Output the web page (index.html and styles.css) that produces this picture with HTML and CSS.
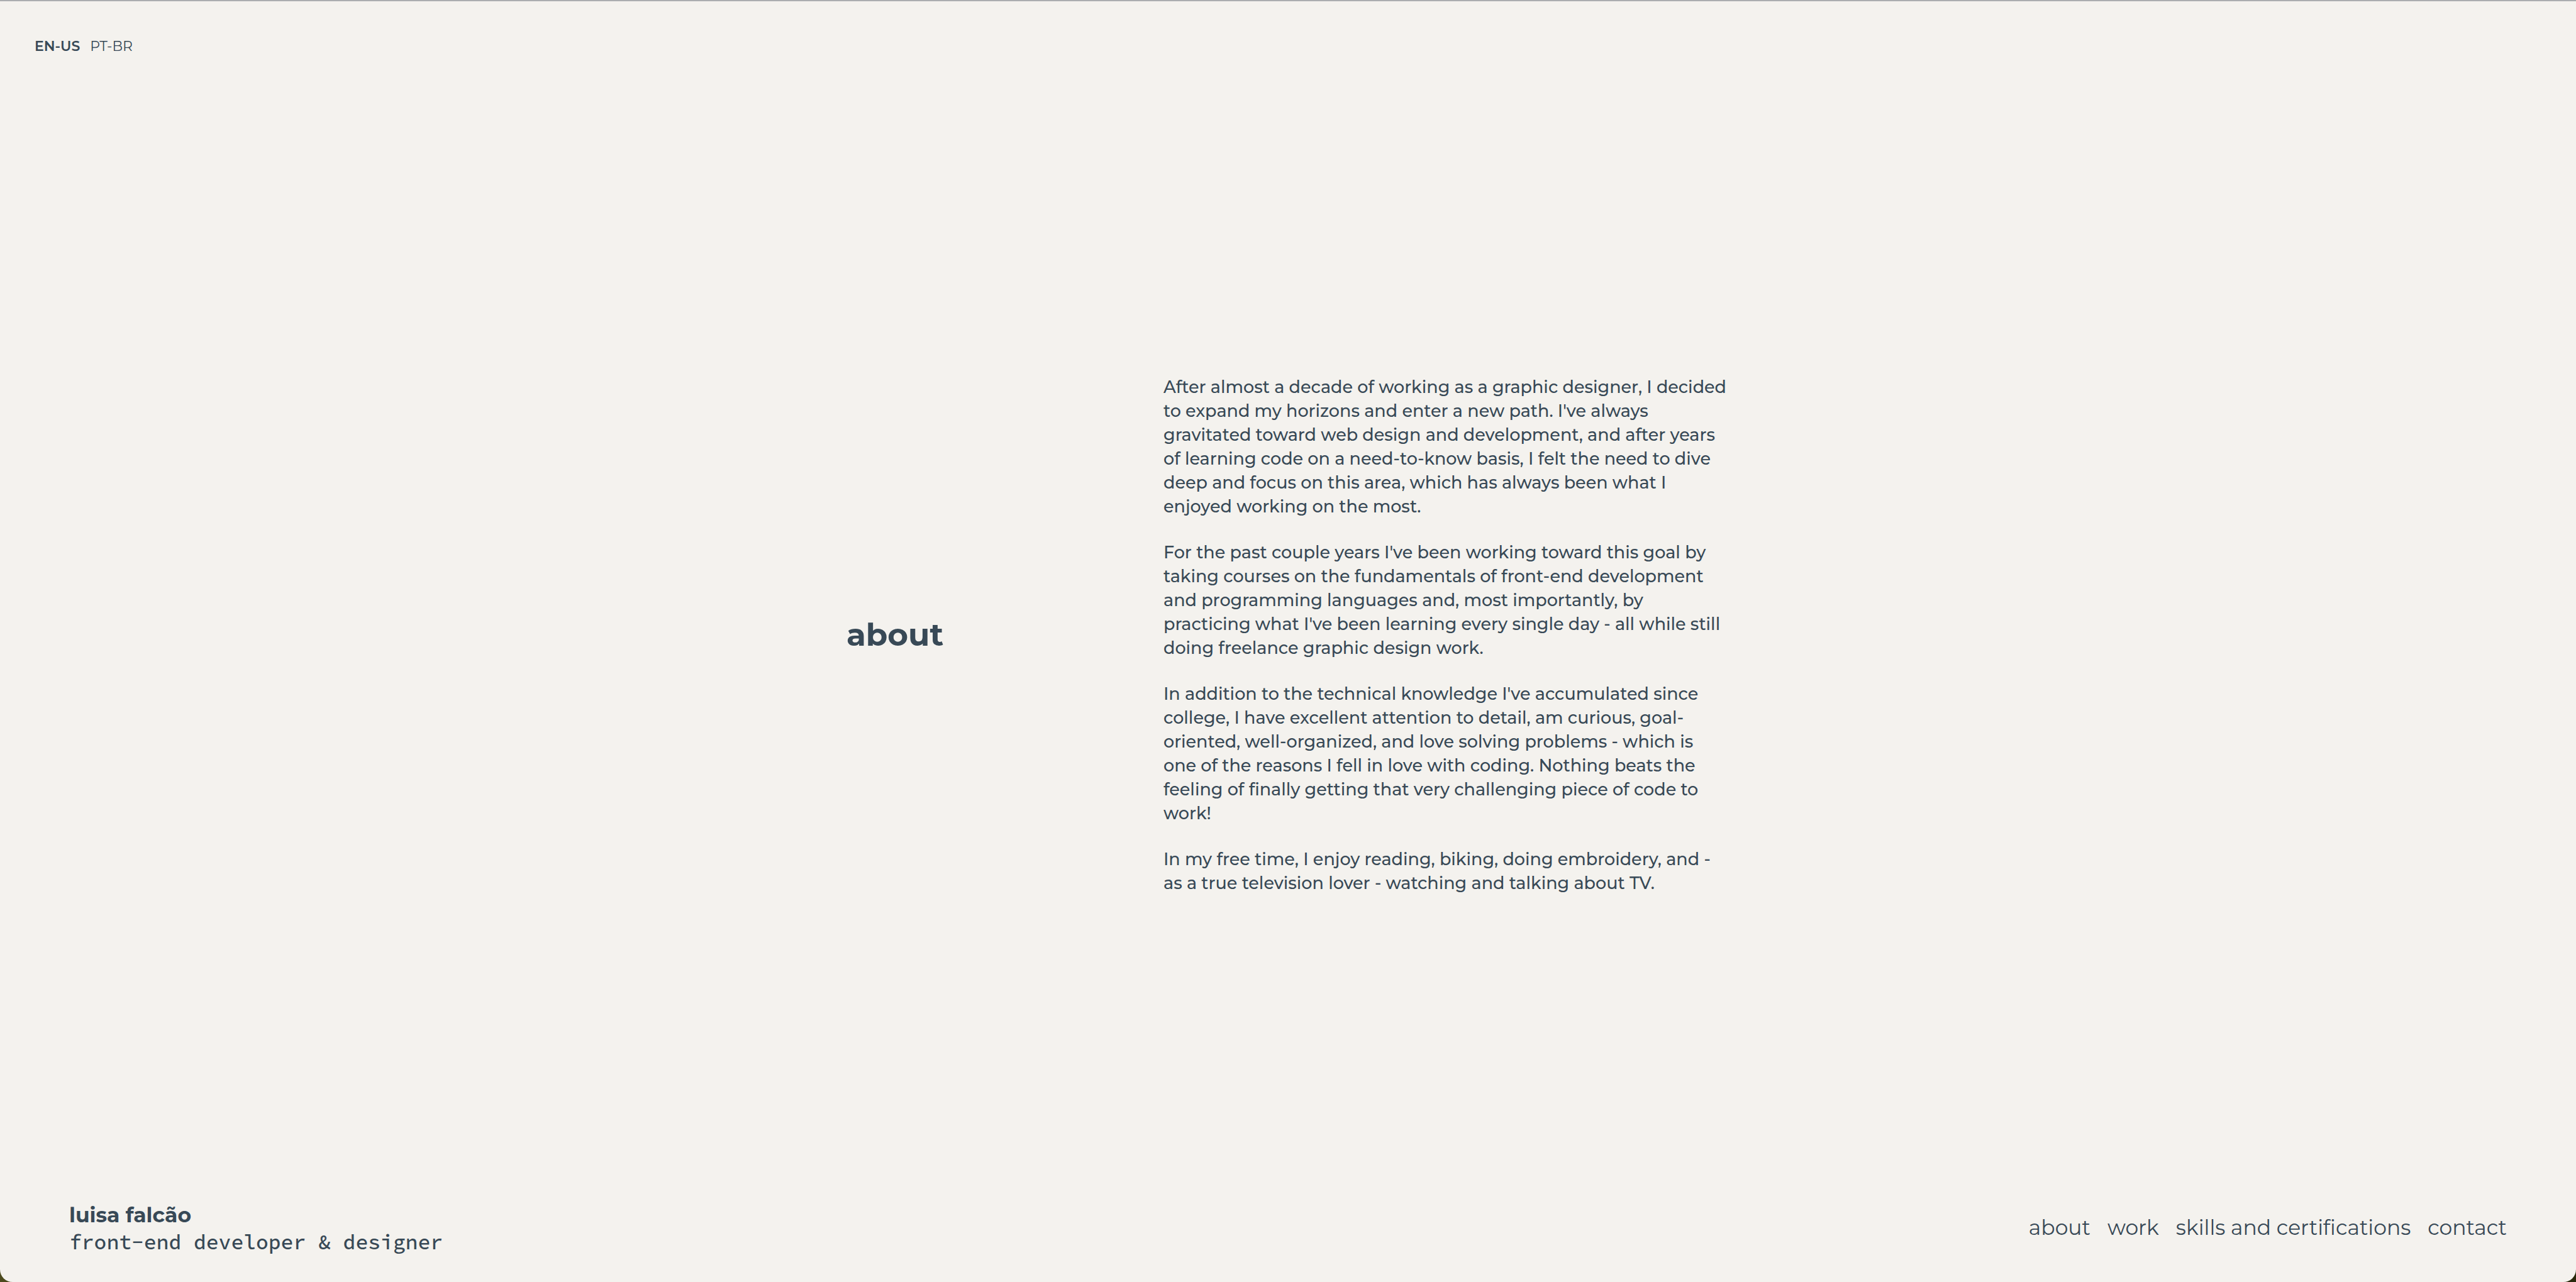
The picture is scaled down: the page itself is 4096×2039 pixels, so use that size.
FILE: index.html
```html
<!DOCTYPE html>
<html lang="en-US">
<head>
<meta charset="utf-8">
<meta name="viewport" content="width=device-width, initial-scale=1">
<title>luisa falcão</title>
<link rel="stylesheet" href="styles.css">
</head>
<body>
<div class="page">
  <header class="header">
    <nav class="languages" aria-label="Language">
      <a class="language language-active" href="#en">EN-US</a>
      <a class="language" href="#pt">PT-BR</a>
    </nav>
  </header>
  <main class="main">
    <section class="about" id="about">
      <h1 class="about-title">about</h1>
      <div class="about-text">
        <p>After almost a decade of working as a graphic designer, I decided<br>to expand my horizons and enter a new path. I've always<br>gravitated toward web design and development, and after years<br>of learning code on a need-to-know basis, I felt the need to dive<br>deep and focus on this area, which has always been what I<br>enjoyed working on the most.</p>
        <p>For the past couple years I've been working toward this goal by<br>taking courses on the fundamentals of front-end development<br>and programming languages and, most importantly, by<br>practicing what I've been learning every single day - all while still<br>doing freelance graphic design work.</p>
        <p>In addition to the technical knowledge I've accumulated since<br>college, I have excellent attention to detail, am curious, goal-<br>oriented, well-organized, and love solving problems - which is<br>one of the reasons I fell in love with coding. Nothing beats the<br>feeling of finally getting that very challenging piece of code to<br>work!</p>
        <p>In my free time, I enjoy reading, biking, doing embroidery, and -<br>as a true television lover - watching and talking about TV.</p>
      </div>
    </section>
  </main>
  <footer class="footer">
    <div class="identity">
      <p class="name">luisa falcão</p>
      <p class="role">front-end developer &amp; designer</p>
    </div>
    <nav class="menu" aria-label="Sections">
      <a href="#about">about</a>
      <a href="#work">work</a>
      <a href="#skills">skills and certifications</a>
      <a href="#contact">contact</a>
    </nav>
  </footer>
</div>
</body>
</html>
```
FILE: styles.css
```css
* {
  box-sizing: border-box;
}

body {
  margin: 0;
  background: linear-gradient(90deg, #4c4a1e, #29290c);
  color: #384956;
  font-family: Montserrat, Inter, sans-serif;
}

p,
h1 {
  margin: 0;
}

a {
  color: inherit;
  text-decoration: none;
}

.page {
  display: flex;
  flex-direction: column;
  min-height: 100vh;
  background: #f4f2ee;
  border-top: 2px solid #abadb0;
  border-radius: 0 0 20px 20px;
}

.header {
  padding: 57px 55px 20px;
}

.languages {
  display: flex;
  gap: 16px;
  font-size: 22px;
  line-height: 30px;
}

.language-active {
  font-weight: 600;
}

.main {
  display: flex;
  flex: 1;
  align-items: center;
  justify-content: center;
}

.about {
  display: flex;
  flex: 0 1 1404px;
  align-items: center;
  justify-content: space-between;
}

.about-title {
  font-size: 50px;
  line-height: 66px;
  font-weight: 700;
}

.about-text {
  display: flex;
  flex: 0 1 900px;
  flex-direction: column;
  gap: 35px;
  font-size: 27px;
  font-weight: 500;
  line-height: 38px;
  white-space: nowrap;
}

.footer {
  display: flex;
  align-items: center;
  justify-content: space-between;
  padding: 0 110px 42px;
}

.identity {
  line-height: 43px;
}

.name {
  font-size: 33px;
  font-weight: 700;
}

.role {
  font-family: "Source Code Pro", "DejaVu Sans Mono", monospace;
  font-size: 33px;
  font-weight: 500;
}

.menu {
  display: flex;
  gap: 27px;
  padding-bottom: 4px;
  font-size: 33px;
  line-height: 42px;
}
```
